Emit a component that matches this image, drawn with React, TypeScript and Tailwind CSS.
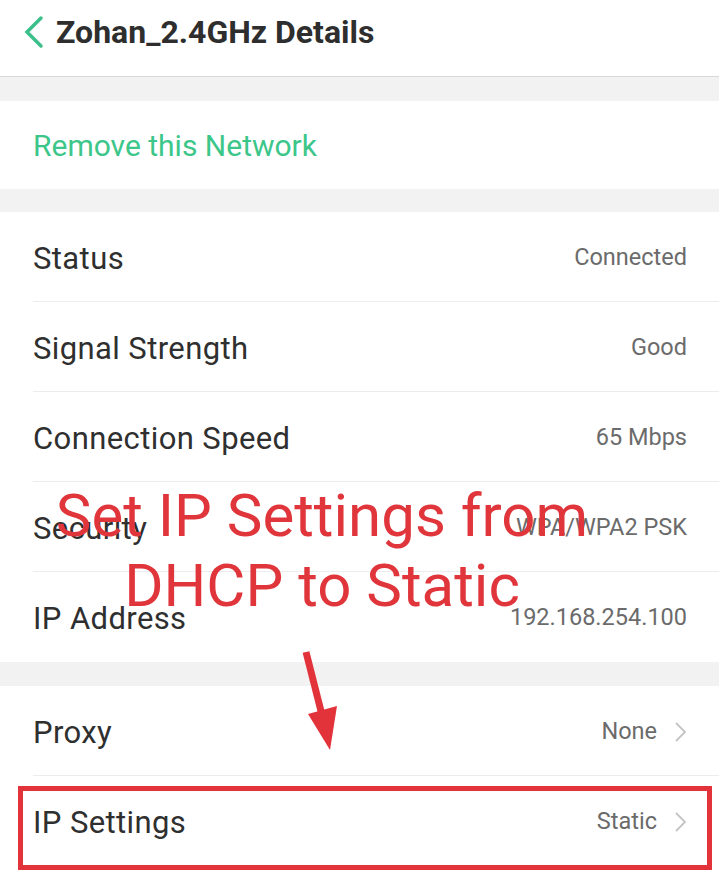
import { ReactNode } from "react";

type Row = { label: string; value: string; arrow?: boolean };

const infoRows: Row[] = [
  { label: "Status", value: "Connected" },
  { label: "Signal Strength", value: "Good" },
  { label: "Connection Speed", value: "65 Mbps" },
  { label: "Security", value: "WPA/WPA2 PSK" },
  { label: "IP Address", value: "192.168.254.100" },
];

function Chevron() {
  return (
    <svg width="13" height="22" viewBox="0 0 13 22" className="ml-[17px]">
      <path d="M2 2l9 9-9 9" fill="none" stroke="#c4c4c4" strokeWidth="1.8" />
    </svg>
  );
}

function SettingRow({ row, last }: { row: Row; last?: boolean }) {
  return (
    <div className="pl-[33px]">
      <div className={"flex h-[90px] items-center justify-between pr-[32px] " + (last ? "" : "border-b border-[#ececec]")}>
        <span className="pt-[5px] text-[31px] text-[#2f2f2f] tracking-[0.4px]">{row.label}</span>
        <span className="flex items-center pt-[2px] text-[23.5px] text-[#6b6b6b]">
          {row.value}
          {row.arrow && <Chevron />}
        </span>
      </div>
    </div>
  );
}

function Section({ children }: { children: ReactNode }) {
  return <div className="bg-white">{children}</div>;
}

export default function App() {
  return (
    <div className="relative h-[886px] w-[719px] overflow-hidden bg-white font-['Roboto',sans-serif]">
      <div className="flex h-[77px] items-center gap-[10px] border-b border-[#d9d9d9] px-[22px] pb-[12px]">
        <svg width="24" height="34" viewBox="0 0 24 34">
          <path d="M19 3L5 17l14 14" fill="none" stroke="#3cbf8a" strokeWidth="3.5" strokeLinecap="round" />
        </svg>
        <h1 className="text-[32px] font-bold text-[#2e2e2e]">Zohan_2.4GHz Details</h1>
      </div>
      <div className="h-[24px] bg-[#f2f2f2]" />
      <Section>
        <div className="flex h-[88px] items-center pl-[33px] text-[30px] text-[#3cc68a]">Remove this Network</div>
      </Section>
      <div className="h-[23px] bg-[#f2f2f2]" />
      <Section>
        {infoRows.map((r, i) => (
          <SettingRow key={r.label} row={r} last={i === infoRows.length - 1} />
        ))}
      </Section>
      <div className="h-[24px] bg-[#f2f2f2]" />
      <Section>
        <SettingRow row={{ label: "Proxy", value: "None", arrow: true }} />
        <SettingRow row={{ label: "IP Settings", value: "Static", arrow: true }} last />
      </Section>

      {/* annotation overlay */}
      <div className="absolute left-[52px] top-[481px] w-[540px] text-center text-[60px] leading-[70px] text-[#e0353b]">
        Set IP Settings from
        <br />
        DHCP to Static
      </div>
      <svg className="absolute left-0 top-0" width="719" height="886">
        <line x1="306" y1="652" x2="322" y2="715" stroke="#e3333a" strokeWidth="7" />
        <polygon points="308,714 337,706 330,750" fill="#e3333a" />
      </svg>
      <div className="absolute left-[18px] top-[786px] h-[84px] w-[694px] border-[5px] border-[#e3333a]" />
    </div>
  );
}
